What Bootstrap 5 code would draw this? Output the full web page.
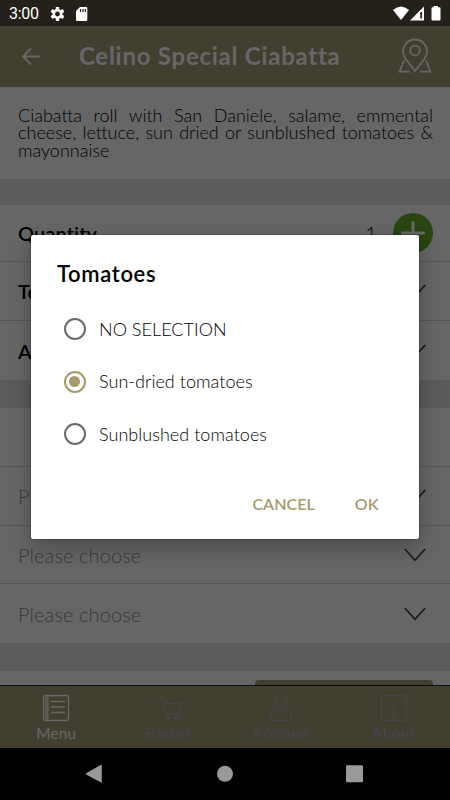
<!DOCTYPE html>
<html lang="en">
<head>
<meta charset="utf-8">
<meta name="viewport" content="width=device-width, initial-scale=1">
<title>Celino Special Ciabatta</title>
<link href="https://cdn.jsdelivr.net/npm/bootstrap@5.3.0/dist/css/bootstrap.min.css" rel="stylesheet">
<style>
body{font-family:Lato,"Open Sans",sans-serif;font-weight:300;color:#000;background:#000}
svg{display:block;flex:none}
.phone{width:450px;height:800px}
.status{height:26px;background:#24211b;font:400 16px/26px Roboto,sans-serif;padding:2px 8px 0 9px}
.status .clock{letter-spacing:-.25px}
.status .gear{margin-left:6px}
.status .card-icon{margin-left:4px}
.app{height:722px;background:#fff}
.topbar{height:61px;background:#a59b78;padding:0 17px 0 20px;color:#fff}
.topbar h1{font-size:24px;font-weight:700;line-height:30px;letter-spacing:.74px;padding:0 0 0 37px}
.desc{height:92px;padding:20px 17px 0 18px;font-size:18px;line-height:17.5px;text-align:justify}
.band{background:#e3e3e3;height:28px}
.band-first{height:26px}
.opt{height:59px;padding:0 24px 0 18px;border-bottom:1px solid #d5d5d5;font-size:20px;letter-spacing:.1px}
.opt b{font-weight:600}
.opt-qty{height:58px;padding-right:17px}
.opt-last{border:0}
.hint{color:#8e8e8e}
.plus{width:40px;height:40px;background:#66ac2c}
.foot{height:14px;padding:9px 17px 0}
.addbtn{width:178px;height:5px;background:#a59b78;border-radius:4px 4px 0 0}
.tabs{height:63px;background:#a59b78;border-top:1px solid #222;color:#aaacb8;font-size:15.5px;line-height:20px;letter-spacing:.15px;font-weight:400}
.tabs>div{width:112.5px;padding-top:7px}
.tabs .on{color:#fff}
.scrim{background:rgba(0,0,0,.6);height:722px;top:26px}
.sysnav{height:52px;background:#000}
.dialog{left:31px;top:235px;width:388px;height:304px;border-radius:2px;box-shadow:0 8px 22px rgba(0,0,0,.28),0 0 2px rgba(0,0,0,.5)}
.dialog h2{font-size:22px;font-weight:600;line-height:28px;margin:25px 0 0 26px;letter-spacing:.65px}
.choices{padding:15px 0 0 32.500px}
.choice{height:52.5px;font-size:18px;letter-spacing:.04px}
.lbl{margin-left:13.500px}
.ring{width:22px;height:22px;border:2px solid #6b6b6b}
.ring.sel{border-color:#a69a6c}
.ring.sel span{width:11px;height:11px;background:#a69a6c}
.acts{color:#a69a6c;font-size:16px;font-weight:600;line-height:20px;padding:33px 40.500px 0 0;gap:40px;letter-spacing:.05px}
</style>
<script src="https://cdn.jsdelivr.net/npm/bootstrap@5.3.0/dist/js/bootstrap.bundle.min.js"></script>
</head>
<body>
<div class="phone position-relative overflow-hidden">
  <div class="status d-flex align-items-center text-white">
    <span class="clock">3:00</span>
    <svg class="gear" width="26" height="22" viewBox="-4 -1 26 22"><g transform="translate(8.5 10)" fill="#fff"><circle r="5"/><rect x="-1.7" y="-7" width="3.4" height="14" rx=".6"/><rect x="-1.7" y="-7" width="3.4" height="14" rx=".6" transform="rotate(60)"/><rect x="-1.7" y="-7" width="3.4" height="14" rx=".6" transform="rotate(120)"/><circle r="2.4" fill="#24211b"/></g></svg>
    <svg class="card-icon" width="14" height="16" viewBox="0 0 14 16"><path d="M5 1h6q1.300 0 1.300 1.300v11.400q0 1.300-1.300 1.300H2.300Q1 15 1 13.700V5z" fill="#fff"/><path d="M5.500 3v3M8 3v3M10.300 3v3" stroke="#24211b" stroke-width="1.200"/></svg>
    <svg class="ms-auto" width="50" height="18" viewBox="393 4.500 50 18"><path d="M394 9.500q8-7 16 0L402 19.500z" fill="#fff"/><path d="M425 6v14h-14z" fill="#fff"/><path d="M421.300 11.500h1.800v6.500h-1.800z" fill="#24211b"/><path d="M434.500 5.500h4.500v1.300h1.500q1 0 1 1v11.200q0 1-1 1h-7q-1 0-1-1V7.800q0-1 1-1h1z" fill="#fff"/></svg>
  </div>

  <div class="app d-flex flex-column">
    <header class="topbar d-flex align-items-center">
      <svg width="22" height="20" viewBox="0 0 22 20" fill="none" stroke="#fff" stroke-width="1.900"><path d="M19.500 10.500H3.200M11 2.500L3 10.500 11 18.500"/></svg>
      <h1 class="mb-0 flex-grow-1">Celino Special Ciabatta</h1>
      <svg width="36" height="36" viewBox="0 0 36 36" fill="none" stroke="#fff" stroke-width="1.800"><path d="M18 33L9 21.500Q6 17.500 6 13.500a12 12 0 0 1 24 0q0 4-3 8z"/><circle cx="18" cy="12.500" r="4.800"/><path d="M7 22.500L2.600 33.600H13M29 22.500l4.400 11.100H23"/></svg>
    </header>
    <div class="desc">Ciabatta roll with San Daniele, salame, emmental cheese, lettuce, sun dried or sunblushed tomatoes &amp; mayonnaise</div>
    <div class="band band-first"></div>
    <div class="opt opt-qty d-flex align-items-center">
      <b>Quantity</b><span class="ms-auto me-3">1</span>
      <div class="plus rounded-circle d-flex align-items-center justify-content-center"><svg width="26" height="26" viewBox="0 0 26 26" stroke="#fff" stroke-width="3.200" stroke-linecap="round"><path d="M13 2.500v21M2.500 13h21"/></svg></div>
    </div>
    <div class="opt d-flex align-items-center justify-content-between"><b>Tomatoes</b><svg width="22" height="14" viewBox="0 0 22 14" fill="none" stroke="#444" stroke-width="1.700"><path d="M.8 1L11 12.300 21.200 1"/></svg></div>
    <div class="opt opt-last d-flex align-items-center justify-content-between"><b>Add Extras</b><svg width="22" height="14" viewBox="0 0 22 14" fill="none" stroke="#444" stroke-width="1.700"><path d="M.8 1L11 12.300 21.200 1"/></svg></div>
    <div class="band"></div>
    <div class="opt"></div>
    <div class="opt hint d-flex align-items-center justify-content-between"><span>Please choose</span><svg width="22" height="14" viewBox="0 0 22 14" fill="none" stroke="#444" stroke-width="1.700"><path d="M.8 1L11 12.300 21.200 1"/></svg></div>
    <div class="opt hint d-flex align-items-center justify-content-between"><span>Please choose</span><svg width="22" height="14" viewBox="0 0 22 14" fill="none" stroke="#444" stroke-width="1.700"><path d="M.8 1L11 12.300 21.200 1"/></svg></div>
    <div class="opt opt-last hint d-flex align-items-center justify-content-between"><span>Please choose</span><svg width="22" height="14" viewBox="0 0 22 14" fill="none" stroke="#444" stroke-width="1.700"><path d="M.8 1L11 12.300 21.200 1"/></svg></div>
    <div class="band"></div>
    <div class="foot d-flex justify-content-end"><div class="addbtn"></div></div>
    <nav class="tabs d-flex mt-auto">
      <div class="on d-flex flex-column align-items-center"><svg width="30" height="30" viewBox="0 0 30 30" fill="none" stroke="currentColor" stroke-width="1.300"><rect x="2.500" y="2.500" width="25" height="25" rx="1.500"/><path d="M4.800 2.500v25M6.800 2.500v25M10 8.500h14M10 14h14M10 19.500h14"/></svg><span>Menu</span></div>
      <div class="d-flex flex-column align-items-center"><svg width="30" height="30" viewBox="0 0 30 30" fill="none" stroke="currentColor" stroke-width="1.300"><path d="M2 4.500h5.500l5.500 17h11.500M9.500 10.500h18.500l-3.500 11"/><circle cx="14" cy="25" r="1.300" fill="currentColor"/><circle cx="22" cy="25" r="1.300" fill="currentColor"/></svg><span>Basket</span></div>
      <div class="d-flex flex-column align-items-center"><svg width="30" height="30" viewBox="0 0 30 30" fill="none" stroke="currentColor" stroke-width="1.300"><circle cx="15" cy="8.500" r="6"/><path d="M11 13.500q-6 3-6 9.500v4.500h20V23q0-6.500-6-9.500"/></svg><span>Account</span></div>
      <div class="d-flex flex-column align-items-center"><svg width="30" height="30" viewBox="0 0 30 30" fill="none" stroke="currentColor" stroke-width="1.300"><rect x="2.500" y="2.500" width="25" height="25" rx="1.500"/><path d="M12.500 12.500H15v10.500M12 23h6"/><circle cx="15" cy="7.500" r=".8" fill="currentColor"/></svg><span>About</span></div>
    </nav>
  </div>

  <div class="sysnav d-flex align-items-center justify-content-center">
    <svg width="450" height="52" viewBox="0 0 450 52" fill="#999"><path d="M86.200 25.200L101 16.800q.8-.3.800.7V34q0 1-.8.600L86.200 26.600q-.8-.7 0-1.400z"/><circle cx="225" cy="25.800" r="8"/><rect x="346" y="17.200" width="17" height="17" rx="1"/></svg>
  </div>

  <div class="scrim position-absolute start-0 w-100"></div>

  <section class="dialog position-absolute bg-white overflow-hidden" role="dialog" aria-label="Tomatoes">
    <h2>Tomatoes</h2>
    <div class="choices">
      <div class="choice d-flex align-items-center"><span class="ring rounded-circle"></span><span class="lbl">NO SELECTION</span></div>
      <div class="choice d-flex align-items-center"><span class="ring sel rounded-circle d-flex align-items-center justify-content-center"><span class="rounded-circle"></span></span><span class="lbl">Sun-dried tomatoes</span></div>
      <div class="choice d-flex align-items-center"><span class="ring rounded-circle"></span><span class="lbl">Sunblushed tomatoes</span></div>
    </div>
    <div class="acts d-flex justify-content-end"><span>CANCEL</span><span>OK</span></div>
  </section>
</div>
</body>
</html>
